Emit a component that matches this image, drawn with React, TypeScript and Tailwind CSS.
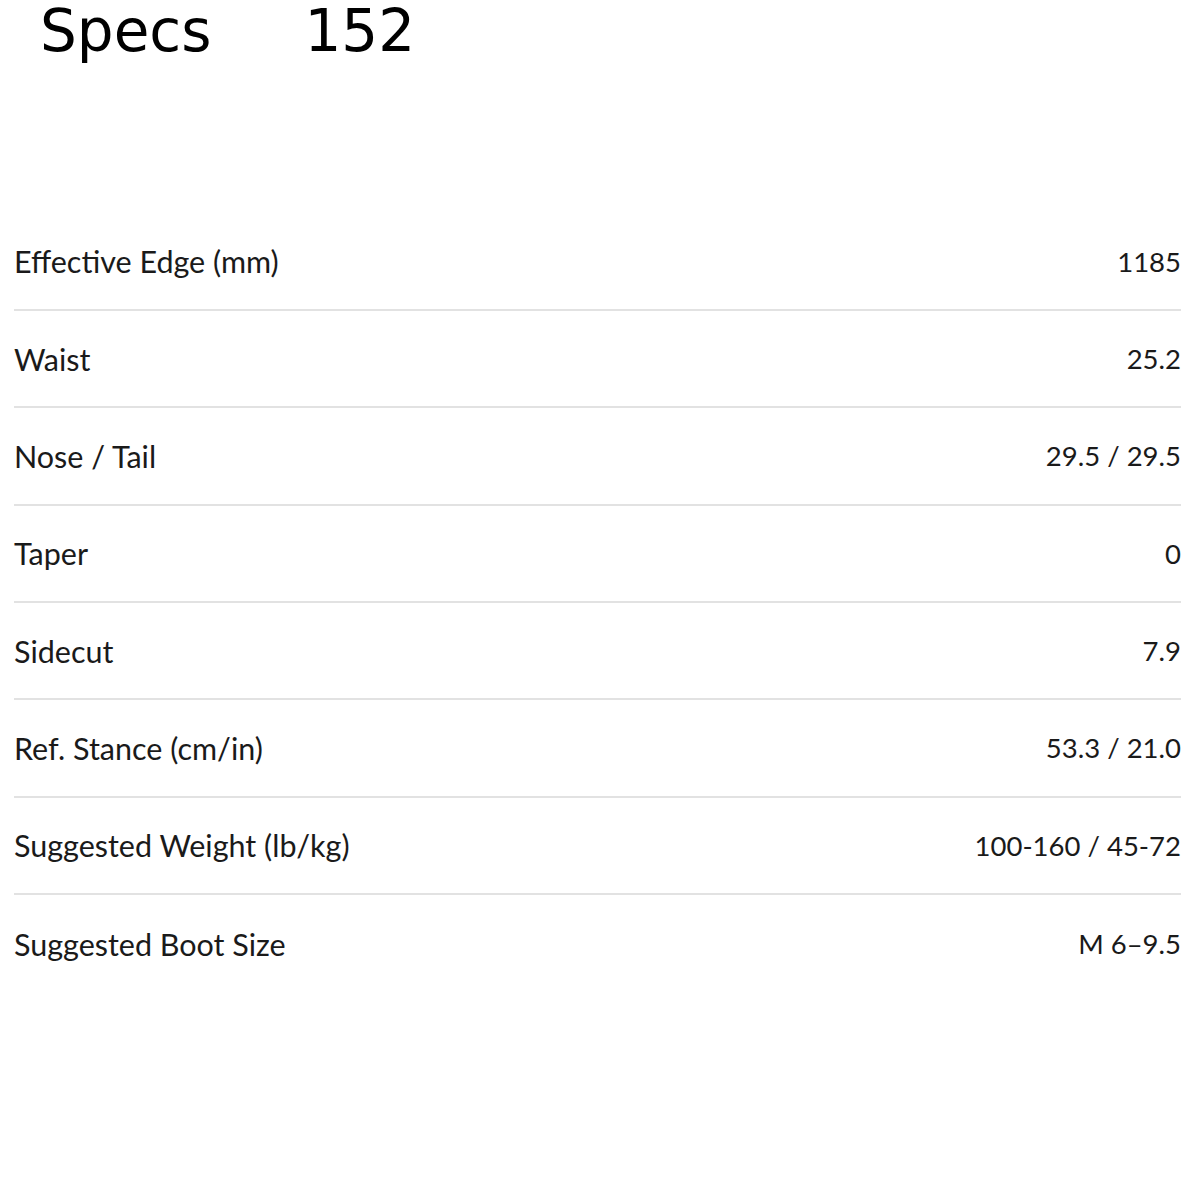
const specs = [
  { label: "Effective Edge (mm)", value: "1185" },
  { label: "Waist", value: "25.2" },
  { label: "Nose / Tail", value: "29.5 / 29.5" },
  { label: "Taper", value: "0" },
  { label: "Sidecut", value: "7.9" },
  { label: "Ref. Stance (cm/in)", value: "53.3 / 21.0" },
  { label: "Suggested Weight (lb/kg)", value: "100-160 / 45-72" },
  { label: "Suggested Boot Size", value: "M 6–9.5" },
];

const App = () => {
  return (
    <div className="w-[1200px] h-[1200px] bg-white text-[#1a1a1a]">
      <div className="flex gap-[93px] pl-[40px] font-['DejaVu_Sans',sans-serif] text-[58px] leading-[1.1] text-black">
        <span>Specs</span>
        <span>152</span>
      </div>
      <div className="flex flex-col pl-[14px] pr-[19px] pt-[150px] font-['Lato',sans-serif]">
        {specs.map((row, i) => (
          <div
            key={row.label}
            className={
              i < specs.length - 1
                ? "flex h-[97.33px] items-center justify-between border-b-2 border-[#e2e2e2]"
                : "flex h-[97.33px] items-center justify-between"
            }
          >
            <span className="text-[30.5px] leading-none">{row.label}</span>
            <span className="text-[27.5px] leading-none">{row.value}</span>
          </div>
        ))}
      </div>
    </div>
  );
};

export default App;
